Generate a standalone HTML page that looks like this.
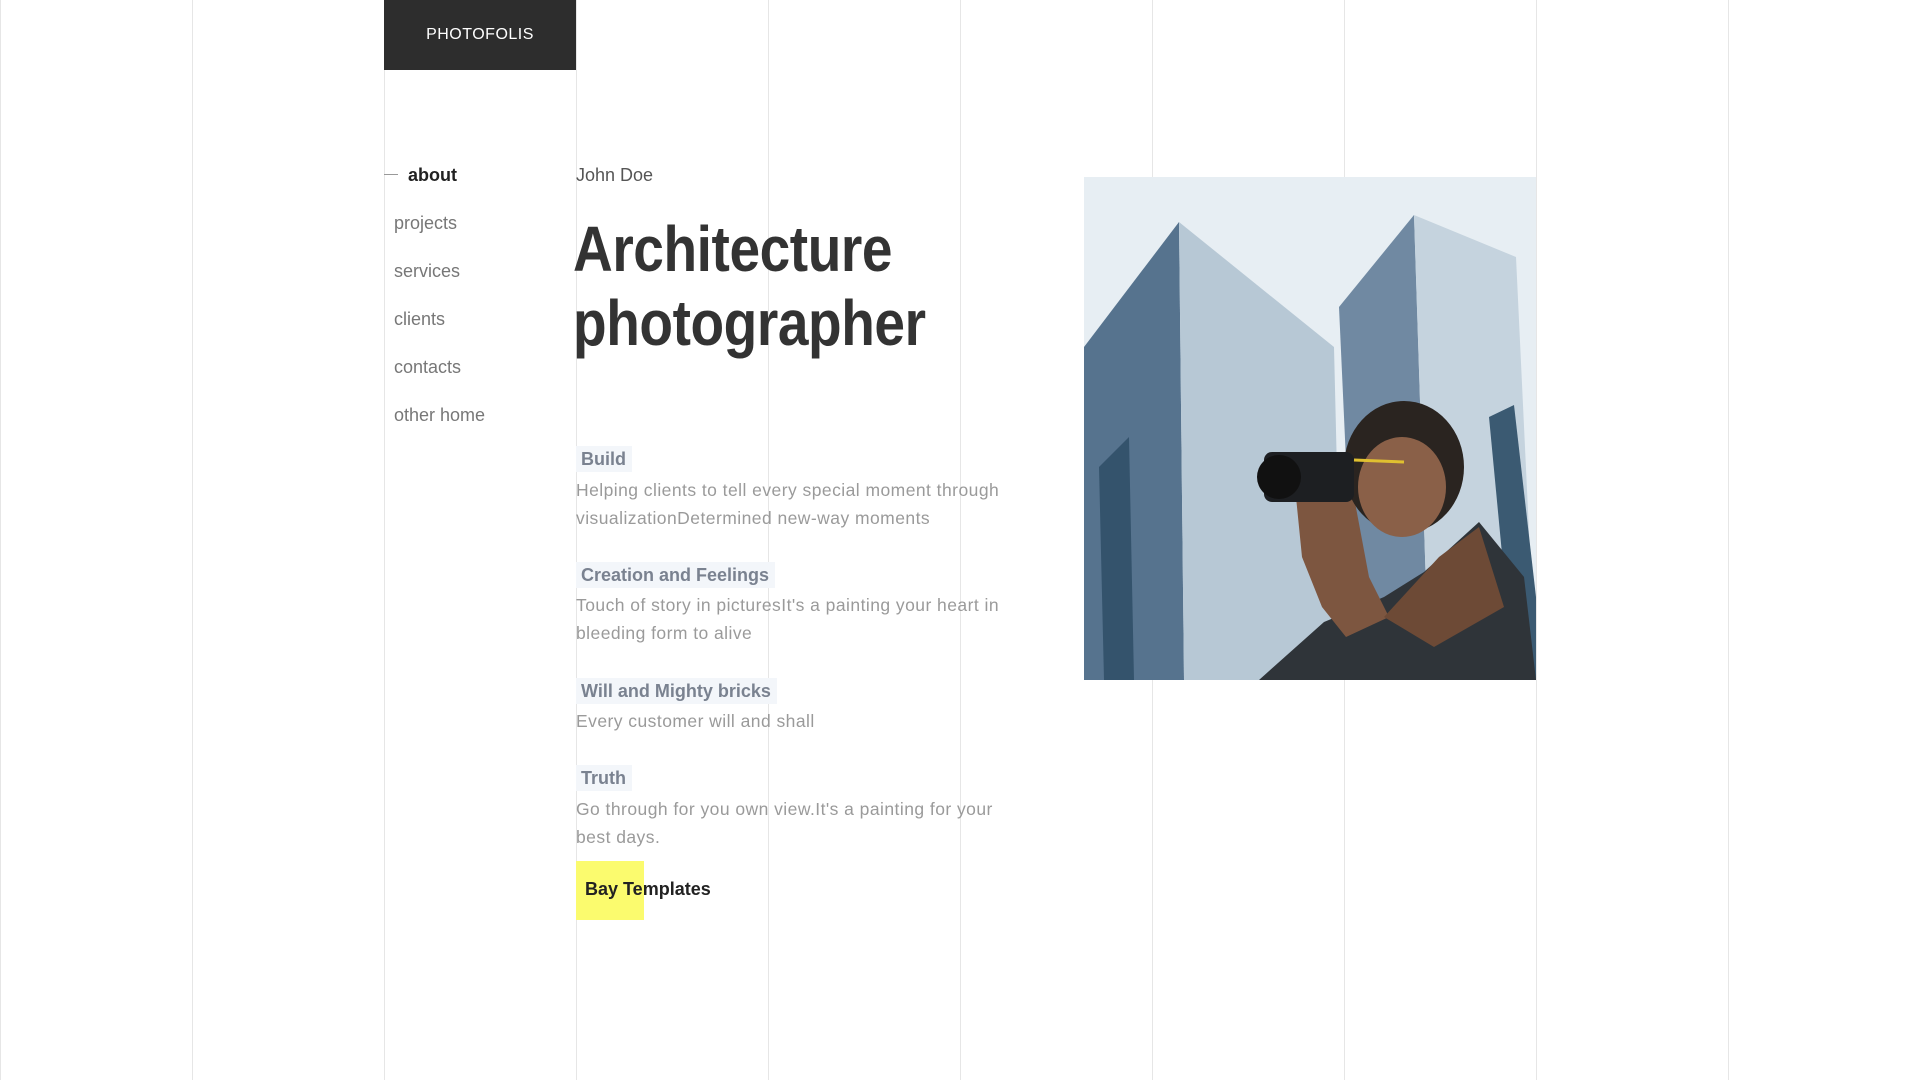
<!DOCTYPE html>
<html><head><meta charset="utf-8">
<style>
html,body{margin:0;padding:0;background:#fff;}
body{width:1920px;height:1080px;position:relative;overflow:hidden;font-family:"Liberation Sans",sans-serif;}
.vl{position:absolute;top:0;width:1px;height:1080px;background:#e6e6e6;}
.logo{position:absolute;left:384px;top:0;width:192px;height:70px;background:#2d2d2d;color:#fff;font-size:16px;letter-spacing:0.5px;text-align:center;line-height:70px;}
.nav{position:absolute;left:394px;font-size:18px;color:#777;}
.dash{position:absolute;left:384px;top:174px;width:14px;height:1px;background:#999;}
.about{position:absolute;left:408px;top:165px;font-size:18px;font-weight:bold;color:#222;}
.jd{position:absolute;left:576px;top:165px;font-size:18px;color:#555;}
h1{position:absolute;left:573px;top:212px;margin:0;font-size:64px;line-height:74px;font-weight:bold;color:#333;transform:scaleX(0.86);transform-origin:0 0;letter-spacing:-0.5px;white-space:nowrap;}
.lab{position:absolute;left:576px;height:26px;line-height:26px;padding:0 6px 0 5px;background:#f3f6fa;font-size:18px;font-weight:bold;color:#7a8290;}
.txt{position:absolute;left:576px;width:450px;font-size:17.5px;line-height:28px;color:#9a9a9a;letter-spacing:0.45px;}
.yb{position:absolute;left:576px;top:861px;width:68px;height:59px;background:#fbfb6e;}
.bt{position:absolute;left:585px;top:879px;font-size:18px;font-weight:bold;color:#222;}
.img{position:absolute;left:1084px;top:177px;width:452px;height:503px;}
</style></head><body>
<div class="vl" style="left:0"></div><div class="vl" style="left:192px"></div><div class="vl" style="left:384px"></div><div class="vl" style="left:576px"></div><div class="vl" style="left:768px"></div><div class="vl" style="left:960px"></div><div class="vl" style="left:1152px"></div><div class="vl" style="left:1344px"></div><div class="vl" style="left:1536px"></div><div class="vl" style="left:1728px"></div>

<div class="logo">PHOTOFOLIS</div>
<div class="dash"></div>
<div class="about">about</div>
<div class="nav" style="top:213px">projects</div>
<div class="nav" style="top:261px">services</div>
<div class="nav" style="top:309px">clients</div>
<div class="nav" style="top:357px">contacts</div>
<div class="nav" style="top:405px">other home</div>

<div class="jd">John Doe</div>
<h1>Architecture<br>photographer</h1>

<div class="lab" style="top:446px">Build</div>
<div class="txt" style="top:476px">Helping clients to tell every special moment through visualizationDetermined new-way moments</div>
<div class="lab" style="top:562px">Creation and Feelings</div>
<div class="txt" style="top:591px">Touch of story in picturesIt's a painting your heart in bleeding form to alive</div>
<div class="lab" style="top:678px">Will and Mighty bricks</div>
<div class="txt" style="top:707px">Every customer will and shall</div>
<div class="lab" style="top:765px">Truth</div>
<div class="txt" style="top:795px">Go through for you own view.It's a painting for your best days.</div>

<div class="yb"></div>
<div class="bt">Bay Templates</div>

<svg class="img" viewBox="0 0 452 503" preserveAspectRatio="none">
<rect width="452" height="503" fill="#e7eef3"/>
<polygon points="0,170 95,45 100,503 0,503" fill="#56738e"/>
<polygon points="95,45 250,170 258,503 100,503" fill="#b7c8d5"/>
<polygon points="15,290 45,260 50,503 20,503" fill="#34536c"/>
<polygon points="255,130 330,38 345,503 272,503" fill="#7089a2"/>
<polygon points="330,38 432,80 452,503 345,503" fill="#c5d3de"/>
<polygon points="405,240 430,228 452,420 452,503 430,503" fill="#3b5a72"/>
<polygon points="175,503 240,445 300,420 340,395 395,345 440,400 452,503" fill="#2f3439"/>
<polygon points="210,300 250,290 270,320 285,400 305,440 262,460 238,430 218,380" fill="#7d5640"/>
<ellipse cx="320" cy="290" rx="60" ry="66" fill="#2a2420"/>
<ellipse cx="318" cy="310" rx="44" ry="50" fill="#8a6048"/>
<rect x="180" y="275" width="90" height="50" rx="8" fill="#1d1f22"/>
<circle cx="195" cy="300" r="22" fill="#111"/>
<line x1="270" y1="283" x2="320" y2="285" stroke="#e0c030" stroke-width="3"/>
<polygon points="300,440 355,380 395,350 420,430 350,470" fill="#6d4a36"/>
</svg>
</body></html>
